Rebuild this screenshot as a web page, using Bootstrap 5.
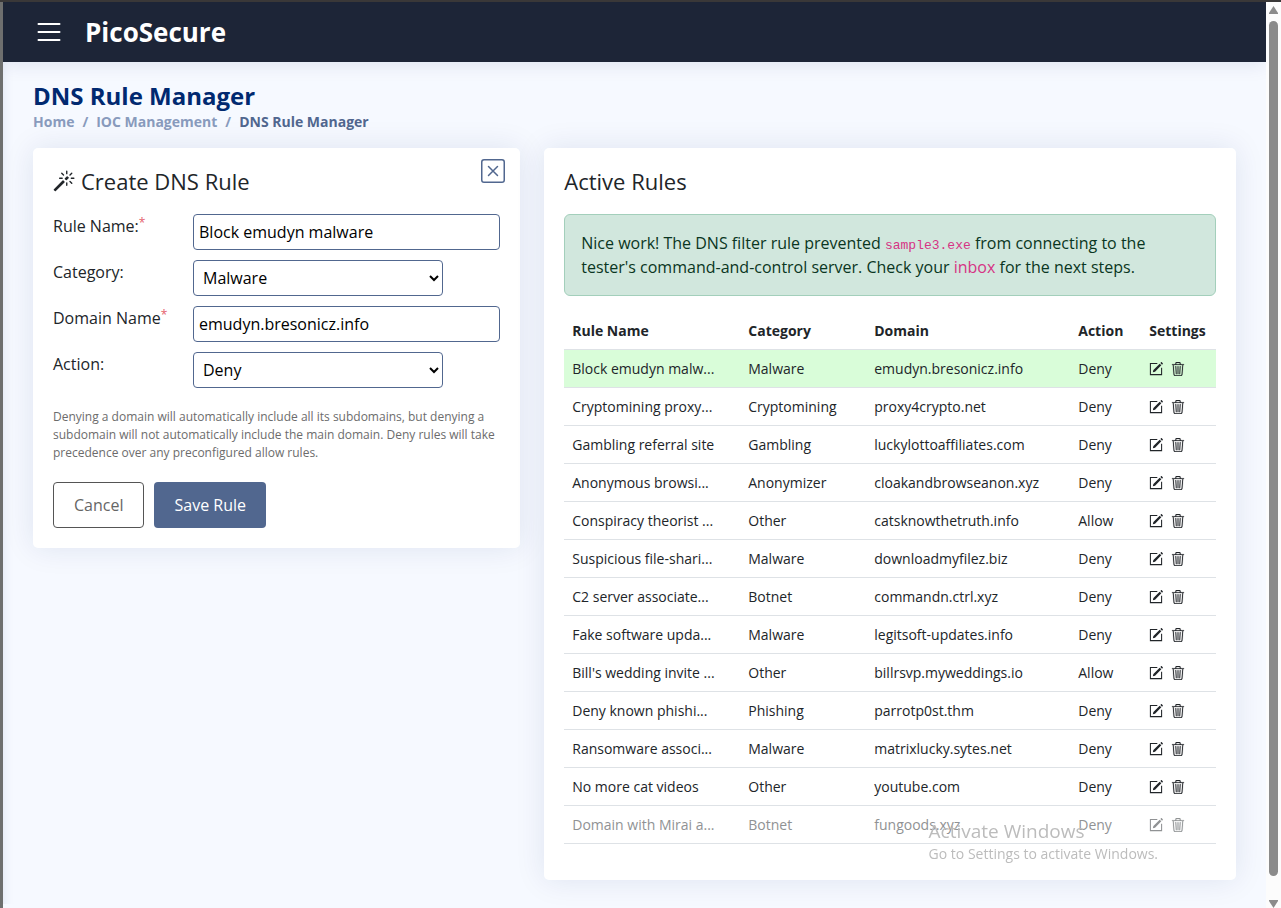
<!DOCTYPE html>
<html lang="en">
<head>
<meta charset="utf-8">
<meta name="viewport" content="width=device-width, initial-scale=1">
<title>DNS Rule Manager - PicoSecure</title>
<link href="https://cdn.jsdelivr.net/npm/bootstrap@5.3.0/dist/css/bootstrap.min.css" rel="stylesheet">
<style>
  body { font-family: "Open Sans", "Noto Sans", sans-serif; background: #f6f9ff; color: #212529; border-top: 2px solid #3a3838; }
  .app-frame { min-height: calc(100vh - 2px); border-left: 3px solid #6e6f6e; }
  .app-header { height: 60px; padding: 0 30px; gap: 20px; background: #1d2537; box-shadow: 0 2px 20px rgba(1, 41, 112, .1); position: relative; }
  .menu-btn { border: 0; background: none; padding: 0; color: #fff; line-height: 0; }
  .brand { font-size: 26px; font-weight: 700; color: #fff; text-decoration: none; }
  .app-main { padding: 20px 30px 0; box-shadow: inset 12px 0 12px -12px rgba(1, 41, 112, .1); }
  .page-title { font-size: 24px; line-height: 28px; font-weight: 700; color: #012970; margin: 0 0 1px; }
  .breadcrumb { font-size: 14px; line-height: 21px; font-weight: 700; --bs-breadcrumb-divider-color: #899bbd; --bs-breadcrumb-item-active-color: #51678f; margin-bottom: 16px; }
  .breadcrumb a { color: #899bbd; text-decoration: none; }
  .panel { border: 0; border-radius: 5px; padding: 20px; margin-bottom: 24px; box-shadow: 0 0 30px rgba(1, 41, 112, .1); }
  .panel-title { display: flex; align-items: center; gap: 6px; font-size: 22px; line-height: 26px; font-weight: 400; margin-bottom: 20px; }
  .close-btn { top: 11px; right: 15px; border: 0; padding: 0; background: none; line-height: 0; color: #51678f; }
  .rule-form { display: grid; grid-template-columns: 140px 1fr; row-gap: 10px; }
  .req { color: #e4606d; font-size: 12px; top: -5px; }
  .field { height: 36px; border: 1px solid #51678f; border-radius: 4px; background: #fff; color: #000; padding: 0 5px; width: 100%; }
  select.field { max-width: 250px; padding: 0; padding-left: 5px; }
  .help { font-size: 12px; line-height: 18px; color: #6c6c6c; margin: 20px 0; }
  .act-btn { padding: 10px 20px; border-radius: 4px; line-height: 24px; }
  .btn-save { border: 0; --bs-btn-bg: #51678f; --bs-btn-color: #fff; --bs-btn-hover-bg: #40598a; --bs-btn-hover-color: #fff; }
  .btn-cancel { --bs-btn-bg: #fff; --bs-btn-color: #666; --bs-btn-border-color: #555; }
  .btn-pair { gap: 10px; }
  .notice { background: #d1e7dd; border: 1px solid #a3cfbb; color: #0a3622; border-radius: 6px; padding: 16px; margin-bottom: 16px; }
  .notice code { font: 13px "Liberation Mono", monospace; color: #d63384; }
  .notice a { color: #d63384; text-decoration: none; }
  .rules { font-size: 14px; line-height: 21px; table-layout: fixed; margin-bottom: 16px; --bs-table-color: #212529; --bs-table-bg: #fff; }
  .rules th, .rules td { white-space: nowrap; }
  .rules .is-new { --bs-table-bg: #d9fdd9; }
  .rules .is-fading td > * , .rules .is-fading td { color: #909294; }
  .c-name { width: 176px; } .c-cat { width: 126px; } .c-dom { width: 204px; } .c-act { width: 71px; }
  .ico-btn { border: 0; background: none; padding: 0; margin-right: 8px; line-height: 0; color: inherit; vertical-align: -2px; }
  .ico-btn svg { display: block; }
  .scroll-track { width: 15px; flex: none; background: #fcfcfc; }
  .scroll-thumb { width: 9px; border-radius: 5px; background: #8b8b8b; margin: 7px 0 24px; }
  .watermark { right: 123px; bottom: 44px; color: #bcbcbc; pointer-events: none; }
  .watermark-title { font-size: 19px; line-height: 24px; }
  .watermark-text { font-size: 14px; line-height: 21px; }
</style>
</head>
<body>
<svg class="d-none" aria-hidden="true">
  <symbol id="i-edit" viewBox="0 0 16 16"><path fill="none" stroke="currentColor" stroke-width="1.2" d="M9.500 1.600H1.600v12.800h12.800V6.500"/><path fill="currentColor" d="M12.200 1.900l1.900 1.900-7.200 7.200-2.500.7.600-2.600zM13 1.100l.8-.8c.3-.3.600-.3.900 0l1 1c.3.300.3.600 0 .9l-.8.800z"/></symbol>
  <symbol id="i-trash" viewBox="0 0 16 16"><path fill="currentColor" stroke="currentColor" stroke-width=".2" d="M6.500 1h3a.5.5 0 0 1 .5.500v1H6v-1a.5.5 0 0 1 .5-.5ZM11 2.500v-1A1.500 1.500 0 0 0 9.500 0h-3A1.500 1.500 0 0 0 5 1.500v1H1.500a.5.5 0 0 0 0 1h.538l.853 10.660A2 2 0 0 0 4.885 16h6.230a2 2 0 0 0 1.994-1.840l.853-10.660h.538a.5.5 0 0 0 0-1H11Zm1.958 1-.846 10.580a1 1 0 0 1-.997.920h-6.230a1 1 0 0 1-.997-.92L3.042 3.500h9.916Zm-7.487 1a.5.5 0 0 1 .528.470l.5 8.500a.5.5 0 0 1-.998.060L5 5.030a.5.5 0 0 1 .470-.53Zm5.058 0a.5.5 0 0 1 .470.530l-.5 8.500a.5.5 0 1 1-.998-.06l.5-8.500a.5.5 0 0 1 .528-.47ZM8 4.500a.5.5 0 0 1 .5.500v8.500a.5.5 0 0 1-1 0V5a.5.5 0 0 1 .5-.5Z"/></symbol>
</svg>
<div class="app-frame d-flex">
  <div class="flex-grow-1 overflow-hidden">
    <header class="app-header d-flex align-items-center">
      <button class="menu-btn" type="button" aria-label="Menu"><svg width="32" height="32" viewBox="0 0 16 16" fill="none" stroke="currentColor" stroke-linecap="round"><path d="M2.750 4h10.500M2.750 8h10.500M2.750 12h10.500"/></svg></button>
      <a class="brand" href="#">PicoSecure</a>
    </header>
    <main class="app-main">
      <h1 class="page-title">DNS Rule Manager</h1>
      <nav aria-label="breadcrumb">
        <ol class="breadcrumb">
          <li class="breadcrumb-item"><a href="#">Home</a></li>
          <li class="breadcrumb-item"><a href="#">IOC Management</a></li>
          <li class="breadcrumb-item active" aria-current="page">DNS Rule Manager</li>
        </ol>
      </nav>
      <div class="row">
        <div class="col-5">
          <section class="card panel">
            <button class="close-btn position-absolute" type="button" aria-label="Close"><svg width="24" height="24" viewBox="0 0 16 16" fill="none" stroke="currentColor" stroke-linecap="round"><rect x=".5" y=".5" width="15" height="15" rx="1.500"/><path d="M5 5l6 6M11 5l-6 6"/></svg></button>
            <h2 class="panel-title"><svg width="22" height="22" viewBox="0 0 16 16" fill="currentColor" aria-hidden="true"><path d="M9.500 2.672a.5.5 0 1 0 1 0V.843a.5.5 0 0 0-1 0v1.829Zm4.500.035A.5.5 0 0 0 13.293 2L12 3.293a.5.5 0 1 0 .707.707L14 2.707ZM7.293 4A.5.5 0 1 0 8 3.293L6.707 2A.5.5 0 0 0 6 2.707L7.293 4Zm-.621 2.500a.5.5 0 1 0 0-1H4.843a.5.5 0 1 0 0 1h1.829Zm8.485 0a.5.5 0 1 0 0-1h-1.829a.5.5 0 0 0 0 1h1.829ZM13.293 10A.5.5 0 1 0 14 9.293L12.707 8a.5.5 0 1 0-.707.707L13.293 10ZM9.500 11.157a.5.5 0 0 0 1 0V9.328a.5.5 0 0 0-1 0v1.829Zm1.854-5.097a.5.5 0 0 0 0-.706l-.708-.708a.5.5 0 0 0-.707 0L8.646 5.940a.5.5 0 0 0 0 .707l.708.708a.5.5 0 0 0 .707 0l1.293-1.293Zm-3 3a.5.5 0 0 0 0-.706l-.708-.708a.5.5 0 0 0-.707 0L.646 13.940a.5.5 0 0 0 0 .707l.707.707a.5.5 0 0 0 .707 0L8.354 9.060Z"/></svg>Create DNS Rule</h2>
            <form>
              <div class="rule-form">
                <label for="rname">Rule Name:<sup class="req">*</sup></label>
                <input class="field" id="rname" type="text" value="Block emudyn malware">
                <label for="rcat">Category:</label>
                <select class="field" id="rcat"><option>Malware</option><option>Botnet</option><option>Phishing</option><option>Other</option></select>
                <label for="rdom">Domain Name<sup class="req">*</sup></label>
                <input class="field" id="rdom" type="text" value="emudyn.bresonicz.info">
                <label for="ract">Action:</label>
                <select class="field" id="ract"><option>Deny</option><option>Allow</option></select>
              </div>
              <p class="help">Denying a domain will automatically include all its subdomains, but denying a subdomain will not automatically include the main domain. Deny rules will take precedence over any preconfigured allow rules.</p>
              <div class="d-flex btn-pair">
                <button class="btn act-btn btn-cancel" type="button">Cancel</button>
                <button class="btn act-btn btn-save" type="button">Save Rule</button>
              </div>
            </form>
          </section>
        </div>
        <div class="col-7">
          <section class="card panel">
            <h2 class="panel-title">Active Rules</h2>
            <div class="notice" role="alert">Nice work! The DNS filter rule prevented <code>sample3.exe</code> from connecting to the tester's command-and-control server. Check your <a href="#">inbox</a> for the next steps.</div>
            <table class="table rules">
              <thead><tr><th class="c-name">Rule Name</th><th class="c-cat">Category</th><th class="c-dom">Domain</th><th class="c-act">Action</th><th>Settings</th></tr></thead>
              <tbody>
                <tr class="is-new"><td>Block emudyn malw...</td><td>Malware</td><td>emudyn.bresonicz.info</td><td>Deny</td><td><button class="ico-btn" type="button" aria-label="Edit"><svg width="14" height="14"><use href="#i-edit"/></svg></button><button class="ico-btn" type="button" aria-label="Delete"><svg width="14" height="14"><use href="#i-trash"/></svg></button></td></tr>
                <tr><td>Cryptomining proxy...</td><td>Cryptomining</td><td>proxy4crypto.net</td><td>Deny</td><td><button class="ico-btn" type="button" aria-label="Edit"><svg width="14" height="14"><use href="#i-edit"/></svg></button><button class="ico-btn" type="button" aria-label="Delete"><svg width="14" height="14"><use href="#i-trash"/></svg></button></td></tr>
                <tr><td>Gambling referral site</td><td>Gambling</td><td>luckylottoaffiliates.com</td><td>Deny</td><td><button class="ico-btn" type="button" aria-label="Edit"><svg width="14" height="14"><use href="#i-edit"/></svg></button><button class="ico-btn" type="button" aria-label="Delete"><svg width="14" height="14"><use href="#i-trash"/></svg></button></td></tr>
                <tr><td>Anonymous browsi...</td><td>Anonymizer</td><td>cloakandbrowseanon.xyz</td><td>Deny</td><td><button class="ico-btn" type="button" aria-label="Edit"><svg width="14" height="14"><use href="#i-edit"/></svg></button><button class="ico-btn" type="button" aria-label="Delete"><svg width="14" height="14"><use href="#i-trash"/></svg></button></td></tr>
                <tr><td>Conspiracy theorist ...</td><td>Other</td><td>catsknowthetruth.info</td><td>Allow</td><td><button class="ico-btn" type="button" aria-label="Edit"><svg width="14" height="14"><use href="#i-edit"/></svg></button><button class="ico-btn" type="button" aria-label="Delete"><svg width="14" height="14"><use href="#i-trash"/></svg></button></td></tr>
                <tr><td>Suspicious file-shari...</td><td>Malware</td><td>downloadmyfilez.biz</td><td>Deny</td><td><button class="ico-btn" type="button" aria-label="Edit"><svg width="14" height="14"><use href="#i-edit"/></svg></button><button class="ico-btn" type="button" aria-label="Delete"><svg width="14" height="14"><use href="#i-trash"/></svg></button></td></tr>
                <tr><td>C2 server associate...</td><td>Botnet</td><td>commandn.ctrl.xyz</td><td>Deny</td><td><button class="ico-btn" type="button" aria-label="Edit"><svg width="14" height="14"><use href="#i-edit"/></svg></button><button class="ico-btn" type="button" aria-label="Delete"><svg width="14" height="14"><use href="#i-trash"/></svg></button></td></tr>
                <tr><td>Fake software upda...</td><td>Malware</td><td>legitsoft-updates.info</td><td>Deny</td><td><button class="ico-btn" type="button" aria-label="Edit"><svg width="14" height="14"><use href="#i-edit"/></svg></button><button class="ico-btn" type="button" aria-label="Delete"><svg width="14" height="14"><use href="#i-trash"/></svg></button></td></tr>
                <tr><td>Bill's wedding invite ...</td><td>Other</td><td>billrsvp.myweddings.io</td><td>Allow</td><td><button class="ico-btn" type="button" aria-label="Edit"><svg width="14" height="14"><use href="#i-edit"/></svg></button><button class="ico-btn" type="button" aria-label="Delete"><svg width="14" height="14"><use href="#i-trash"/></svg></button></td></tr>
                <tr><td>Deny known phishi...</td><td>Phishing</td><td>parrotp0st.thm</td><td>Deny</td><td><button class="ico-btn" type="button" aria-label="Edit"><svg width="14" height="14"><use href="#i-edit"/></svg></button><button class="ico-btn" type="button" aria-label="Delete"><svg width="14" height="14"><use href="#i-trash"/></svg></button></td></tr>
                <tr><td>Ransomware associ...</td><td>Malware</td><td>matrixlucky.sytes.net</td><td>Deny</td><td><button class="ico-btn" type="button" aria-label="Edit"><svg width="14" height="14"><use href="#i-edit"/></svg></button><button class="ico-btn" type="button" aria-label="Delete"><svg width="14" height="14"><use href="#i-trash"/></svg></button></td></tr>
                <tr><td>No more cat videos</td><td>Other</td><td>youtube.com</td><td>Deny</td><td><button class="ico-btn" type="button" aria-label="Edit"><svg width="14" height="14"><use href="#i-edit"/></svg></button><button class="ico-btn" type="button" aria-label="Delete"><svg width="14" height="14"><use href="#i-trash"/></svg></button></td></tr>
                <tr class="is-fading"><td>Domain with Mirai a...</td><td>Botnet</td><td>fungoods.xyz</td><td>Deny</td><td><button class="ico-btn" type="button" aria-label="Edit"><svg width="14" height="14"><use href="#i-edit"/></svg></button><button class="ico-btn" type="button" aria-label="Delete"><svg width="14" height="14"><use href="#i-trash"/></svg></button></td></tr>
              </tbody>
            </table>
          </section>
        </div>
      </div>
    </main>
  </div>
  <div class="scroll-track d-flex flex-column align-items-center" aria-hidden="true">
    <svg width="9" height="8" viewBox="0 0 9 8" class="mt-1 flex-shrink-0"><path fill="#8b8b8b" d="M4.500 0L9 7v1H0V7z"/></svg>
    <div class="scroll-thumb flex-grow-1"></div>
    <svg width="9" height="8" viewBox="0 0 9 8" class="flex-shrink-0"><path fill="#8b8b8b" d="M4.500 8L9 1V0H0v1z"/></svg>
  </div>
</div>
<div class="watermark position-fixed">
  <div class="watermark-title">Activate Windows</div>
  <div class="watermark-text">Go to Settings to activate Windows.</div>
</div>
<script src="https://cdn.jsdelivr.net/npm/bootstrap@5.3.0/dist/js/bootstrap.bundle.min.js"></script>
</body>
</html>
